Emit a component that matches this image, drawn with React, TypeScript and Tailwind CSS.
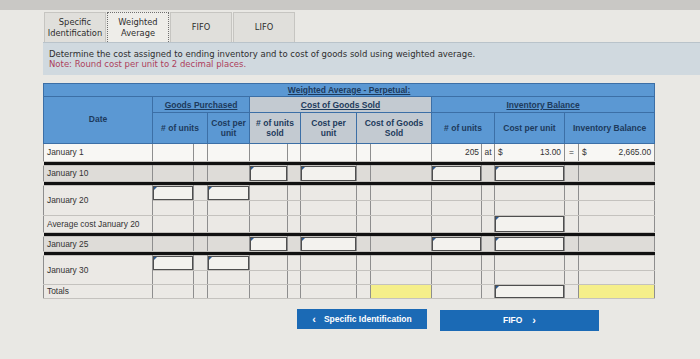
import React from 'react';

const cols = [109, 41, 14, 42, 38, 13, 56, 14, 61, 50, 13, 70, 14, 76];

type Cell = 'input' | 'yellow' | { text: string; align?: 'right' | 'center' } | { dollar: string } | null;

interface BodyRow {
  date?: string;
  span?: number;
  h: number;
  gray?: boolean;
  white?: boolean;
  cells: Record<number, Cell>;
}

const sep = 'sep';

const rows: (BodyRow | typeof sep)[] = [
  {
    date: 'January 1',
    h: 18,
    white: true,
    cells: {
      9: { text: '205', align: 'right' },
      10: { text: 'at', align: 'center' },
      11: { dollar: '13.00' },
      12: { text: '=', align: 'center' },
      13: { dollar: '2,665.00' },
    },
  },
  sep,
  { date: 'January 10', h: 16, gray: true, cells: { 4: 'input', 6: 'input', 9: 'input', 11: 'input' } },
  sep,
  { date: 'January 20', span: 2, h: 15, cells: { 1: 'input', 3: 'input' } },
  { h: 15, cells: {} },
  { date: 'Average cost January 20', h: 17, cells: { 11: 'input' } },
  sep,
  { date: 'January 25', h: 15, gray: true, cells: { 4: 'input', 6: 'input', 9: 'input', 11: 'input' } },
  sep,
  { date: 'January 30', span: 2, h: 15, cells: { 1: 'input', 3: 'input' } },
  { h: 14, cells: {} },
  { date: 'Totals', h: 14, cells: { 8: 'yellow', 13: 'yellow', 11: 'input' } },
];

function InputBox({ h }: { h: number }) {
  return (
    <div
      className="relative w-full border border-[#4e4e4e] bg-[#f3f2ee]"
      style={{ height: h }}
    >
      <span className="absolute left-0 top-0 h-0 w-0 border-r-[3px] border-t-[3px] border-r-transparent border-t-[#2c5a92]" />
    </div>
  );
}

function Tab({ label, active }: { label: React.ReactNode; active?: boolean }) {
  return (
    <div
      className={
        active
          ? 'flex h-full w-[62px] items-center justify-center border border-b-0 border-dotted border-[#6f6f6f] bg-[#eeede9] text-center leading-[11px]'
          : 'flex h-full w-[62px] items-center justify-center border border-b-0 border-[#c6c5c1] bg-[#e0dfdb] text-center leading-[11px]'
      }
    >
      {label}
    </div>
  );
}

export default function App() {
  const th = 'p-0 border border-[#3c6fa6] font-bold text-[#1d3a5c] text-[8.5px] leading-[10px]';
  const blue = 'bg-[#5b98d3]';
  const grey = 'bg-[#c3cad1]';

  return (
    <div className="flex h-[359px] w-[700px] flex-col overflow-hidden bg-[#e9e8e4]">
      <div className="h-[10px] bg-[#c9c8c5]" />
      <div className="flex flex-col pl-[43px]">
        <div className="ml-[1px] mt-[2px] flex h-[30px] gap-[1px] font-['DejaVu_Sans',sans-serif] text-[8.3px] text-[#2e2e2e]">
          <Tab label={<>Specific<br />Identification</>} />
          <Tab label={<>Weighted<br />Average</>} active />
          <Tab label="FIFO" />
          <Tab label="LIFO" />
        </div>
        <div className="h-[33px] border-t border-[#b9c3ca] bg-[#d0d9df] px-[6px] pt-[6px] font-['DejaVu_Sans',sans-serif] text-[8.5px] leading-[10px]">
          <div className="text-[#2e2e2e]">
            Determine the cost assigned to ending inventory and to cost of goods sold using weighted average.
          </div>
          <div className="text-[#ad3f5c]">Note: Round cost per unit to 2 decimal places.</div>
        </div>

        <table className="mt-[8px] w-[611px] table-fixed border-collapse font-['Liberation_Sans',Arial,sans-serif] text-[8.4px] text-[#333]">
          <colgroup>
            {cols.map((w, i) => (
              <col key={i} style={{ width: w }} />
            ))}
          </colgroup>
          <thead>
            <tr className="h-[13px]">
              <th colSpan={14} className={`${th} ${blue} underline`}>
                Weighted Average - Perpetual:
              </th>
            </tr>
            <tr className="h-[16px]">
              <th rowSpan={2} className={`${th} ${blue} pb-[2px]`}>
                Date
              </th>
              <th colSpan={3} className={`${th} ${blue} underline`}>
                Goods Purchased
              </th>
              <th colSpan={5} className={`${th} ${grey} underline`}>
                Cost of Goods Sold
              </th>
              <th colSpan={5} className={`${th} ${blue} underline`}>
                Inventory Balance
              </th>
            </tr>
            <tr className="h-[31px]">
              <th colSpan={2} className={`${th} ${blue}`}># of units</th>
              <th className={`${th} ${blue}`}>
                Cost per
                <br />
                unit
              </th>
              <th colSpan={2} className={`${th} ${grey}`}>
                # of units
                <br />
                sold
              </th>
              <th className={`${th} ${grey}`}>
                Cost per
                <br />
                unit
              </th>
              <th colSpan={2} className={`${th} ${grey}`}>
                Cost of Goods
                <br />
                Sold
              </th>
              <th colSpan={2} className={`${th} ${blue}`}># of units</th>
              <th className={`${th} ${blue}`}>Cost per unit</th>
              <th colSpan={2} className={`${th} ${blue}`}>Inventory Balance</th>
            </tr>
          </thead>
          <tbody>
            {rows.map((r, ri) => {
              if (r === sep) {
                return (
                  <tr key={ri} className="h-[4px]">
                    <td colSpan={14} className="bg-[#111] p-0" />
                  </tr>
                );
              }
              const bg = r.white ? 'bg-[#f8f7f4]' : r.gray ? 'bg-[#dedcd8]' : 'bg-[#ebe9e5]';
              return (
                <tr key={ri} style={{ height: r.h }} className={bg}>
                  {r.date !== undefined && (
                    <td
                      rowSpan={r.span}
                      className="border-x border-y border-x-[#8e8e8e] border-y-[#c4c2be] px-[3px] py-0 leading-[9px]"
                    >
                      {r.date}
                    </td>
                  )}
                  {cols.slice(1).map((_, ci) => {
                    const c = r.cells[ci + 1];
                    const base =
                      'border-x border-y border-x-[#8e8e8e] border-y-[#c4c2be] p-0 leading-[9px]';
                    if (c === 'input') {
                      return (
                        <td key={ci} className={base}>
                          <InputBox h={r.h - 1} />
                        </td>
                      );
                    }
                    if (c === 'yellow') {
                      return <td key={ci} className={`${base} bg-[#f5ef8a]`} />;
                    }
                    if (c && typeof c === 'object' && 'dollar' in c) {
                      return (
                        <td key={ci} className={`${base} px-[3px]`}>
                          <div className="flex justify-between">
                            <span>$</span>
                            <span>{c.dollar}</span>
                          </div>
                        </td>
                      );
                    }
                    if (c && typeof c === 'object' && 'text' in c) {
                      return (
                        <td
                          key={ci}
                          className={`${base} px-[2px] ${c.align === 'right' ? 'text-right' : 'text-center'}`}
                        >
                          {c.text}
                        </td>
                      );
                    }
                    return <td key={ci} className={base} />;
                  })}
                </tr>
              );
            })}
          </tbody>
        </table>

        <div className="ml-[254px] mt-[10px] flex items-start gap-[13px] font-['Liberation_Sans',Arial,sans-serif] text-[8.5px] font-bold text-white">
          <button className="flex h-[20px] w-[130px] items-center justify-center gap-[8px] bg-[#1b6ab5]">
            <span className="text-[11px]">‹</span>
            <span>Specific Identification</span>
          </button>
          <button className="mt-[1px] flex h-[21px] w-[159px] items-center justify-center gap-[10px] bg-[#1b6ab5]">
            <span>FIFO</span>
            <span className="text-[11px]">›</span>
          </button>
        </div>
      </div>
    </div>
  );
}
